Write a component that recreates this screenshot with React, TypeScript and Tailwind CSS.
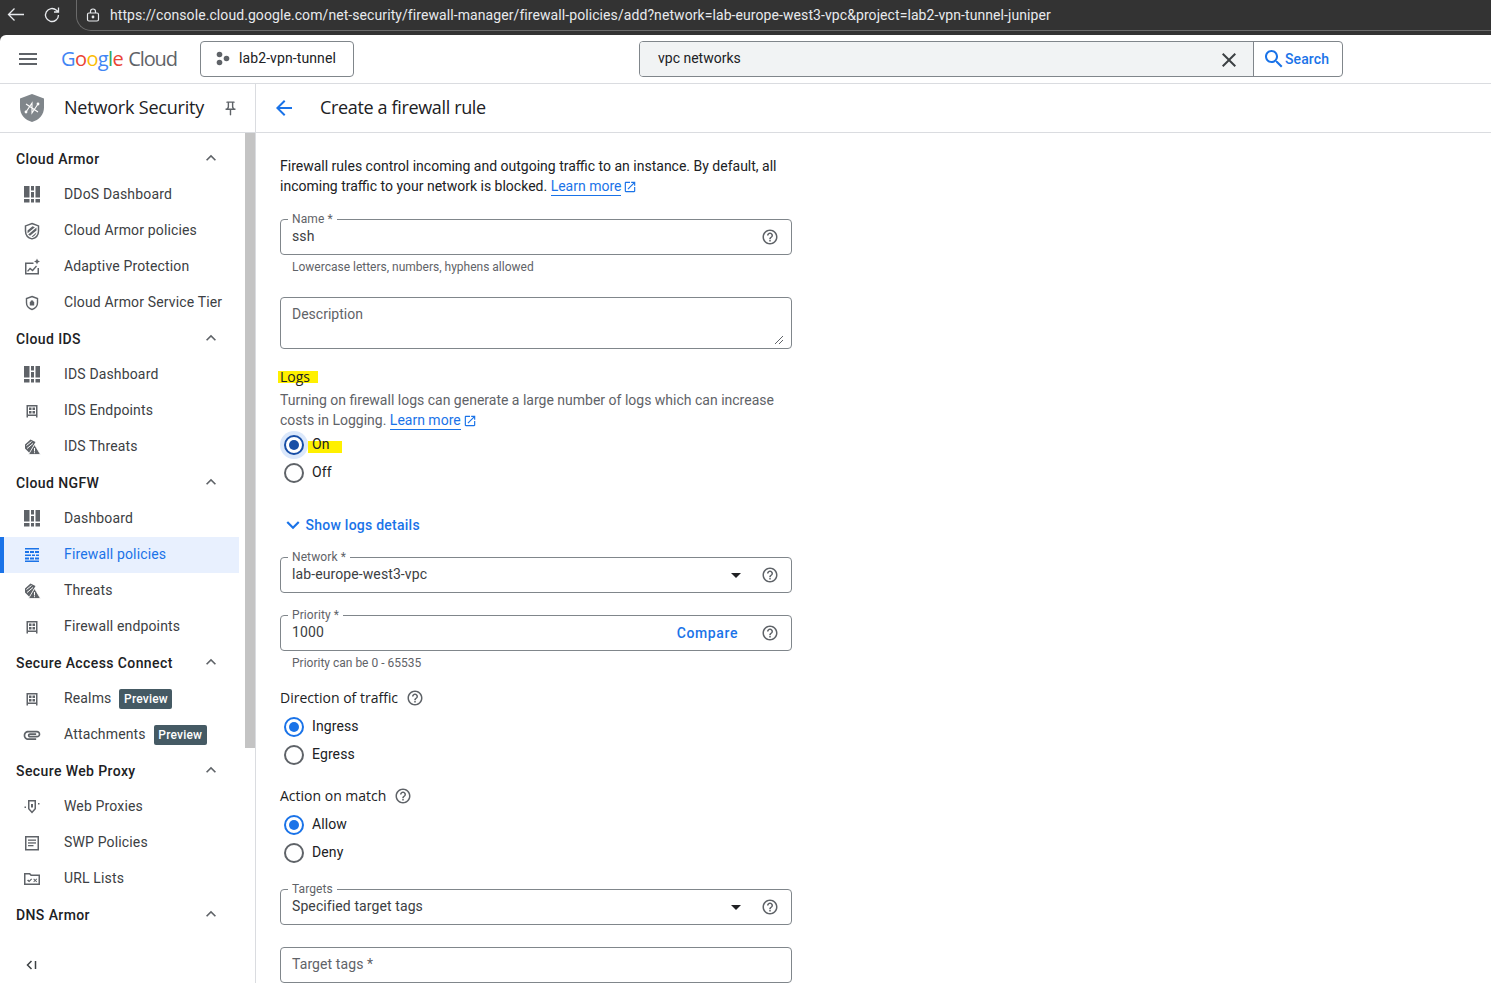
import React from "react";

const P = ({ d, size = 20, className = "", fill = "currentColor" }: { d: string; size?: number; className?: string; fill?: string }) => (
  <svg width={size} height={size} viewBox="0 0 24 24" fill={fill} className={"shrink-0 " + className}>
    <path d={d} />
  </svg>
);

const HELP = "M11 18h2v-2h-2v2zm1-16C6.48 2 2 6.48 2 12s4.48 10 10 10 10-4.48 10-10S17.52 2 12 2zm0 18c-4.41 0-8-3.59-8-8s3.59-8 8-8 8 3.59 8 8-3.59 8-8 8zm0-14c-2.21 0-4 1.79-4 4h2c0-1.1.9-2 2-2s2 .9 2 2c0 2-3 1.75-3 5h2c0-2.25 3-2.5 3-5 0-2.21-1.79-4-4-4z";
const OPEN = "M19 19H5V5h7V3H5c-1.11 0-2 .9-2 2v14c0 1.1.89 2 2 2h14c1.1 0 2-.9 2-2v-7h-2v7zM14 3v2h3.59l-9.83 9.83 1.41 1.41L19 6.41V10h2V3h-7z";
const LESS = "M12 8l-6 6 1.41 1.41L12 10.83l4.59 4.58L18 14z";
const MORE = "M16.59 8.59L12 13.17 7.41 8.59 6 10l6 6 6-6z";
const BACK = "M20 11H7.83l5.59-5.59L12 4l-8 8 8 8 1.41-1.41L7.83 13H20v-2z";
const CLOSE = "M19 6.41L17.59 5 12 10.59 6.41 5 5 6.41 10.59 12 5 17.59 6.41 19 12 13.41 17.59 19 19 17.59 13.41 12z";
const SEARCH = "M15.5 14h-.79l-.28-.27C15.41 12.59 16 11.11 16 9.5 16 5.91 13.09 3 9.5 3S3 5.91 3 9.5 5.91 16 9.5 16c1.61 0 3.09-.59 4.23-1.57l.27.28v.79l5 4.99L20.49 19l-4.99-5zm-6 0C7.01 14 5 11.99 5 9.5S7.01 5 9.5 5 14 7.01 14 9.5 11.99 14 9.5 14z";
const MENU = "M3 18h18v-2H3v2zm0-5h18v-2H3v2zm0-7v2h18V6H3z";
const PIN = "M14 4v5c0 1.12.37 2.16 1 3H9c.65-.86 1-1.9 1-3V4h4m3-2H7c-.55 0-1 .45-1 1s.45 1 1 1h1v5c0 1.66-1.34 3-3 3v2h5.97v7l1 1 1-1v-7H19v-2c-1.66 0-3-1.34-3-3V4h1c.55 0 1-.45 1-1s-.45-1-1-1z";
const ATTACH = "M2 12.5C2 9.46 4.46 7 7.5 7H18c2.21 0 4 1.79 4 4s-1.79 4-4 4H9.5C8.12 15 7 13.88 7 12.5S8.12 10 9.5 10H17v2H9.41c-.55 0-.55 1 0 1H18c1.1 0 2-.9 2-2s-.9-2-2-2H7.5C5.57 9 4 10.57 4 12.5S5.57 16 7.5 16H17v2H7.5C4.46 18 2 15.54 2 12.5z";

const Svg = ({ children, size = 20 }: { children: React.ReactNode; size?: number }) => (
  <svg width={size} height={size} viewBox="0 0 20 20" fill="#5f6368" className="shrink-0">
    {children}
  </svg>
);

const IDash = () => (
  <Svg>
    <rect x="2" y="1" width="5.500" height="11.500" />
    <rect x="2" y="14" width="5.500" height="3.500" />
    <rect x="9" y="1" width="3" height="4.500" />
    <rect x="9" y="7" width="3" height="5.500" />
    <rect x="9" y="14" width="3" height="3.500" />
    <rect x="13.500" y="1" width="4.500" height="11.500" />
    <rect x="13.500" y="14" width="4.500" height="3.500" />
  </Svg>
);
const IShieldStripes = () => (
  <Svg>
    <path d="M10 2.500l6.500 2.400v5c0 3.900-2.700 6.900-6.500 8-3.800-1.100-6.500-4.100-6.500-8v-5z" fill="none" stroke="#5f6368" strokeWidth="1.500" />
    <path d="M5.500 9.500l5-4.200 2.400.9-7.300 6zM6.200 13.600l8.300-7v2.800l-6.500 5.400zM9.500 15.800l5-4.300c-.5 2-2.200 3.700-4 4.600z" />
  </Svg>
);
const IAdaptive = () => (
  <Svg>
    <path d="M3 5.500h8.500V7H4.500v9h11v-5H17v6.500H3z" />
    <path d="M5 14l3-3.500 2.500 2 3.500-4 1 .9-4.300 5-2.600-2-2 2.400z" />
    <path d="M15 1.500l.9 2.100 2.100.9-2.100.9-.9 2.100-.9-2.100-2.100-.9 2.100-.9z" />
  </Svg>
);
const IShieldLock = () => (
  <Svg>
    <path d="M10 3.500l5.500 2v4.300c0 3.300-2.300 5.800-5.500 6.700-3.200-.9-5.500-3.400-5.500-6.700V5.500z" fill="none" stroke="#5f6368" strokeWidth="1.400" />
    <path d="M7.800 9h4.400v3.500H7.800z" />
    <circle cx="10" cy="8.800" r="1.600" />
  </Svg>
);
const IEndpoint = () => (
  <Svg>
    <path d="M4.500 4h11v12.500h-1.500V15H6v1.500H4.500zM6 5.500v8h8v-8z" />
    <rect x="7" y="6.500" width="2.500" height="2.500" />
    <rect x="10.500" y="6.500" width="2.500" height="2.500" />
    <rect x="7" y="10" width="2.500" height="2.500" />
    <rect x="10.500" y="10" width="2.500" height="2.500" />
  </Svg>
);
const IThreat = () => (
  <Svg>
    <path d="M8.500 2.500l5 2.500-2 3.500-4 7.500-4.500-4.500L3 7.500z" />
    <path d="M4.500 8.500l5-4M5 11.500l6-5" stroke="#fff" strokeWidth="1" />
    <path d="M12.500 7.500l6 10H6.500z" stroke="#fff" strokeWidth="0.800" />
    <rect x="12" y="11" width="1" height="3.500" fill="#fff" />
    <rect x="12" y="15.200" width="1" height="1" fill="#fff" />
  </Svg>
);
const IFirewall = () => (
  <svg width="20" height="20" viewBox="0 0 20 20" fill="#1a73e8" className="shrink-0">
    <rect x="3" y="3" width="14" height="1.500" />
    <rect x="3" y="6" width="4" height="2" /><rect x="8" y="6" width="4" height="2" /><rect x="13" y="6" width="4" height="2" />
    <rect x="3" y="9.500" width="6" height="1.500" /><rect x="10" y="9.500" width="3" height="1.500" /><rect x="14" y="9.500" width="3" height="1.500" />
    <rect x="3" y="12.500" width="4" height="2" /><rect x="8" y="12.500" width="4" height="2" /><rect x="13" y="12.500" width="4" height="2" />
    <rect x="3" y="15.500" width="14" height="1.500" />
  </svg>
);
const IProxy = () => (
  <Svg>
    <path d="M6 3h8v9l-4 4.500L6 12zM7.500 4.500v6.900l2.500 2.800 2.500-2.800V4.500z" />
    <rect x="9" y="7" width="2" height="3.500" />
    <rect x="2.500" y="9.500" width="1.500" height="1.500" />
    <rect x="16" y="6" width="1.500" height="1.500" />
  </Svg>
);
const IList = () => (
  <Svg>
    <path d="M3 3h14v14.500H3zM4.500 4.500V16h11V4.500z" />
    <rect x="6" y="6.500" width="8" height="1.300" />
    <rect x="6" y="9.300" width="8" height="1.300" />
    <rect x="6" y="12" width="5.500" height="1.300" />
  </Svg>
);
const IUrl = () => (
  <Svg>
    <path d="M2 4h6l1.500 1.500H18V16H2zM3.500 5.500v9h13V7H8.800L7.300 5.500z" />
    <path d="M5 11.500l1.200-1 1 1 2-2 .9.800-2.900 2.900zM12 9.500l1.200 1.200 1.200-1.200.7.700-1.200 1.200 1.200 1.200-.7.700-1.200-1.200-1.200 1.200-.7-.7 1.200-1.200-1.200-1.200z" />
  </Svg>
);

type Item = { label: string; icon: React.ReactNode; active?: boolean; preview?: boolean };

const groups: { title: string; items: Item[] }[] = [
  {
    title: "Cloud Armor",
    items: [
      { label: "DDoS Dashboard", icon: <IDash /> },
      { label: "Cloud Armor policies", icon: <IShieldStripes /> },
      { label: "Adaptive Protection", icon: <IAdaptive /> },
      { label: "Cloud Armor Service Tier", icon: <IShieldLock /> },
    ],
  },
  {
    title: "Cloud IDS",
    items: [
      { label: "IDS Dashboard", icon: <IDash /> },
      { label: "IDS Endpoints", icon: <IEndpoint /> },
      { label: "IDS Threats", icon: <IThreat /> },
    ],
  },
  {
    title: "Cloud NGFW",
    items: [
      { label: "Dashboard", icon: <IDash /> },
      { label: "Firewall policies", icon: <IFirewall />, active: true },
      { label: "Threats", icon: <IThreat /> },
      { label: "Firewall endpoints", icon: <IEndpoint /> },
    ],
  },
  {
    title: "Secure Access Connect",
    items: [
      { label: "Realms", icon: <IEndpoint />, preview: true },
      { label: "Attachments", icon: <P d={ATTACH} size={20} className="text-[#5f6368]" />, preview: true },
    ],
  },
  {
    title: "Secure Web Proxy",
    items: [
      { label: "Web Proxies", icon: <IProxy /> },
      { label: "SWP Policies", icon: <IList /> },
      { label: "URL Lists", icon: <IUrl /> },
    ],
  },
  { title: "DNS Armor", items: [] },
];

const Sidebar = () => (
  <aside className="relative w-[256px] shrink-0 border-r border-[#dadce0] pt-[8px] h-full">
    <div className="w-[239px]">
      {groups.map((g) => (
        <div key={g.title}>
          <div className="h-[36px] flex items-center justify-between pl-[16px] pr-[18px] text-[14px] font-medium tracking-[0.4px] text-[#202124]">
            <span>{g.title}</span>
            <P d={LESS} size={20} className="text-[#5f6368] mb-[2px]" />
          </div>
          {g.items.map((it) => (
            <div
              key={it.label}
              className={
                "h-[36px] flex items-center text-[14px] tracking-[0.15px] " +
                (it.active
                  ? "bg-[#e8f0fe] text-[#1a73e8] border-l-[4px] border-[#1a73e8] pl-[18px]"
                  : "text-[#3c4043] pl-[22px]")
              }
            >
              <span className="w-[42px] flex">{it.icon}</span>
              <span className="pb-[2px]">{it.label}</span>
              {it.preview && (
                <span className="ml-[8px] h-[20px] w-[53px] flex items-center justify-center rounded-[2px] bg-[#455a64] text-white text-[12px] font-medium tracking-[0.2px]">
                  Preview
                </span>
              )}
            </div>
          ))}
        </div>
      ))}
    </div>
    <div className="absolute right-0 top-0 w-[10px] h-[615px] bg-[#c4c4c4]" />
    <div className="absolute left-[22px] bottom-[8px]">
      <svg width="20" height="20" viewBox="0 0 20 20" fill="none" stroke="#3c4043" strokeWidth="1.500">
        <path d="M9.500 6L5.500 10l4 4M13.500 6v8" />
      </svg>
    </div>
  </aside>
);

const Help = ({ size = 18 }: { size?: number }) => <P d={HELP} size={size} className="text-[#5f6368]" />;

const Caret = () => (
  <svg width="10" height="5" viewBox="0 0 10 5" className="shrink-0">
    <path d="M0 0h10L5 5z" fill="#202124" />
  </svg>
);

const Field = ({
  label,
  value,
  className = "",
  right,
}: {
  label?: string;
  value?: string;
  className?: string;
  right?: React.ReactNode;
}) => (
  <div className={"relative h-[36px] border border-[#80868b] rounded-[4px] flex items-center pl-[11px] pr-[12px] " + className}>
    {label && (
      <span className="absolute left-[7px] top-[-7px] bg-white px-[4px] text-[12px] leading-[12px] tracking-[0.1px] text-[#5f6368]">
        {label}
      </span>
    )}
    <span className="text-[14px] text-[#3c4043] flex-1 pb-[2px] tracking-[0.1px]">{value}</span>
    {right}
  </div>
);

const LearnMore = () => (
  <span className="inline-flex items-center text-[#1a73e8] align-baseline">
    <span className="border-b border-[#1a73e8] leading-[17px]">Learn more</span>
    <P d={OPEN} size={14} className="ml-[2px]" />
  </span>
);

const Radio = ({ label, checked, focus, highlight }: { label: string; checked?: boolean; focus?: boolean; highlight?: boolean }) => (
  <div className="relative h-[28px] flex items-center">
    {focus && <span className="absolute left-[0px] top-0 w-[28px] h-[28px] rounded-full bg-[#dbe8fb]" />}
    {highlight && <span className="absolute left-[28px] top-[10px] w-[34px] h-[12px] bg-[#fff000]" />}
    <span
      className={
        "relative ml-[4px] w-[20px] h-[20px] rounded-full border-2 flex items-center justify-center " +
        (checked ? (focus ? "border-[#174ea6]" : "border-[#1a73e8]") : "border-[#5f6368]") +
        (focus ? " bg-white" : "")
      }
    >
      {checked && <span className={"w-[10px] h-[10px] rounded-full " + (focus ? "bg-[#174ea6]" : "bg-[#1a73e8]")} />}
    </span>
    <span className="relative ml-[8px] text-[14px] text-[#202124] pb-[2px] tracking-[0.1px]">{label}</span>
  </div>
);

const Main = () => (
  <main className="flex-1 pl-[24px] pt-[23px] h-full overflow-hidden">
    <div className="w-[512px]">
      <p className="text-[14px] leading-[20px] text-[#202124]">
        Firewall rules control incoming and outgoing traffic to an instance. By default, all
        <br />
        incoming traffic to your network is blocked. <LearnMore />
      </p>

      <Field className="mt-[23px]" label="Name *" value="ssh" right={<Help />} />
      <p className="mt-[4px] pl-[12px] text-[12px] leading-[16px] text-[#5f6368]">Lowercase letters, numbers, hyphens allowed</p>

      <div className="relative mt-[22px] h-[52px] border border-[#80868b] rounded-[4px] pl-[11px] pt-[6px] text-[14px] leading-[20px] text-[#5f6368]">
        Description
        <svg width="8" height="8" viewBox="0 0 8 8" className="absolute right-[8px] bottom-[4px]" stroke="#5f6368" strokeWidth="1">
          <path d="M0 8L8 0M4 8L8 4" />
        </svg>
      </div>

      <div className="relative mt-[18px] h-[20px] flex items-center text-[14px] font-medium font-['Open_Sans',sans-serif] text-[#202124]">
        <span className="absolute left-[-2px] top-[4px] w-[40px] h-[12px] bg-[#fff000]" />
        <span className="relative pb-[2px]">Logs</span>
      </div>
      <p className="mt-[3px] text-[14px] leading-[20px] text-[#5f6368]">
        Turning on firewall logs can generate a large number of logs which can increase
        <br />
        costs in Logging. <LearnMore />
      </p>
      <div className="mt-[1px]">
        <Radio label="On" checked focus highlight />
        <Radio label="Off" />
      </div>

      <div className="mt-[28px] h-[20px] flex items-center text-[#1a73e8] text-[14px] font-medium tracking-[0.25px]">
        <P d={MORE} size={26} />
        <span className="ml-[-0.500px]">Show logs details</span>
      </div>

      <Field
        className="mt-[22px]"
        label="Network *"
        value="lab-europe-west3-vpc"
        right={
          <span className="flex items-center gap-[20px]">
            <Caret />
            <Help />
          </span>
        }
      />
      <Field
        className="mt-[22px]"
        label="Priority *"
        value="1000"
        right={
          <span className="flex items-center gap-[23px]">
            <span className="text-[#1a73e8] text-[14px] font-medium tracking-[0.6px]">Compare</span>
            <Help />
          </span>
        }
      />
      <p className="mt-[4px] pl-[12px] text-[12px] leading-[16px] text-[#5f6368]">Priority can be 0 - 65535</p>

      <div className="mt-[17px] h-[20px] flex items-center gap-[8px] text-[14px] font-medium font-['Open_Sans',sans-serif] text-[#202124]">
        <span className="pb-[2px]">Direction of traffic</span>
        <Help />
      </div>
      <div className="mt-[5px]">
        <Radio label="Ingress" checked />
        <Radio label="Egress" />
      </div>

      <div className="mt-[17px] h-[20px] flex items-center gap-[8px] text-[14px] font-medium font-['Open_Sans',sans-serif] text-[#202124]">
        <span className="pb-[2px]">Action on match</span>
        <Help />
      </div>
      <div className="mt-[5px]">
        <Radio label="Allow" checked />
        <Radio label="Deny" />
      </div>

      <Field
        className="mt-[22px]"
        label="Targets"
        value="Specified target tags"
        right={
          <span className="flex items-center gap-[20px]">
            <Caret />
            <Help />
          </span>
        }
      />
      <div className="mt-[22px] h-[36px] border border-[#80868b] rounded-[4px] pl-[11px] flex items-center text-[14px] tracking-[0.1px] text-[#5f6368] pb-[2px]">
        Target tags *
      </div>
    </div>
  </main>
);

export default function App() {
  return (
    <div className="w-[1491px] h-[983px] overflow-hidden flex flex-col bg-[#333333] font-['Roboto',sans-serif]">
      {/* browser chrome */}
      <div className="h-[35px] shrink-0 flex items-start">
        <div className="w-[76px] h-[30px] flex items-center pl-[6px] gap-[16px]">
          <svg width="20" height="20" viewBox="0 0 20 20" fill="none" stroke="#e8eaed" strokeWidth="1.300">
            <path d="M18 9.500H2.500M8.500 3.500L2.500 9.500l6 6" />
          </svg>
          <svg width="20" height="20" viewBox="0 0 20 20" fill="none" stroke="#e8eaed" strokeWidth="1.300">
            <path d="M16.500 10a6.500 6.500 0 1 1-2-4.700L16.500 7M16.500 2.500V7H12" />
          </svg>
        </div>
        <div className="flex-1 h-[31px] rounded-bl-[15px] border-l border-b border-[#6a6a6a] flex items-center pl-[9px]">
          <svg width="14" height="14" viewBox="0 0 14 14" fill="none" stroke="#e8eaed" strokeWidth="1.200">
            <rect x="1.500" y="5" width="11" height="8" rx="1.500" />
            <path d="M4.500 5V3.500a2.500 2.500 0 0 1 5 0V5" />
            <circle cx="7" cy="9" r="0.800" fill="#e8eaed" />
          </svg>
          <span className="ml-[10px] text-[14px] tracking-[0.08px] text-[#e8eaed] whitespace-nowrap">
            https://console.cloud.google.com/net-security/firewall-manager/firewall-policies/add?network=lab-europe-west3-vpc&amp;project=lab2-vpn-tunnel-juniper
          </span>
        </div>
      </div>

      {/* page */}
      <div className="flex-1 min-h-0 flex flex-col bg-white rounded-tl-[6px]">
        <header className="h-[49px] shrink-0 border-b border-[#dadce0] flex items-center">
          <P d={MENU} size={24} className="ml-[16px] text-[#5f6368]" />
          <div className="ml-[21px] w-[139px] flex items-baseline font-['Open_Sans',sans-serif] text-[20px] tracking-[-0.6px]">
            <span className="font-medium text-[#4285f4]">G</span>
            <span className="font-medium text-[#ea4335]">o</span>
            <span className="font-medium text-[#fbbc04]">o</span>
            <span className="font-medium text-[#4285f4]">g</span>
            <span className="font-medium text-[#34a853]">l</span>
            <span className="font-medium text-[#ea4335]">e</span>
            <span className="ml-[5px] text-[#5f6368] tracking-[-1.100px]">Cloud</span>
          </div>
          <div className="w-[154px] h-[36px] border border-[#80868b] rounded-[4px] flex items-center pl-[14px] text-[14px] text-[#202124] tracking-[0.1px]">
            <svg width="16" height="16" viewBox="0 0 16 16" fill="#5f6368">
              <circle cx="4.500" cy="3.500" r="2.800" />
              <circle cx="4.500" cy="11.500" r="2.800" />
              <circle cx="11.500" cy="7.500" r="2.800" />
            </svg>
            <span className="ml-[8px] pb-[1px]">lab2-vpn-tunnel</span>
          </div>
          <div className="ml-[285px] w-[704px] h-[36px] border border-[#80868b] rounded-[4px] flex overflow-hidden">
            <div className="flex-1 bg-[#f1f3f4] flex items-center pl-[18px] pr-[12px] text-[14px] text-[#202124]">
              <span className="flex-1 pb-[2px]">vpc networks</span>
              <P d={CLOSE} size={24} className="text-[#3c4043] mt-[2px]" />
            </div>
            <div className="w-[89px] border-l border-[#80868b] flex items-center pl-[8px] text-[#1a73e8] text-[14px] font-medium tracking-[0.1px]">
              <P d={SEARCH} size={24} />
              <span className="ml-[-1px]">Search</span>
            </div>
          </div>
        </header>

        <div className="h-[49px] shrink-0 border-b border-[#dadce0] flex">
          <div className="w-[256px] border-r border-[#dadce0] flex items-center pl-[18px]">
            <svg width="28" height="30" viewBox="0 0 28 30">
              <path d="M14 1l12 4.500v9c0 7-5 12.500-12 14.500C7 27 2 21.500 2 14.500v-9z" fill="#80868b" />
              <path d="M8 19l6-9v10l6-9M8 11l12 8" fill="none" stroke="#fff" strokeWidth="1.100" />
              <circle cx="8" cy="19" r="1.400" fill="#fff" />
              <circle cx="20" cy="11" r="1.400" fill="#fff" />
            </svg>
            <span className="ml-[18px] pb-[1px] text-[18px] text-[#202124] font-['Open_Sans',sans-serif] tracking-[-0.2px]">Network Security</span>
            <P d={PIN} size={17} className="ml-[18px] text-[#5f6368]" />
          </div>
          <div className="flex-1 flex items-center pl-[16px]">
            <P d={BACK} size={24} className="text-[#1a73e8]" />
            <span className="ml-[24px] pb-[1px] text-[18px] text-[#202124] font-['Open_Sans',sans-serif] tracking-[-0.35px]">Create a firewall rule</span>
          </div>
        </div>

        <div className="flex-1 min-h-0 flex">
          <Sidebar />
          <Main />
        </div>
      </div>
    </div>
  );
}
